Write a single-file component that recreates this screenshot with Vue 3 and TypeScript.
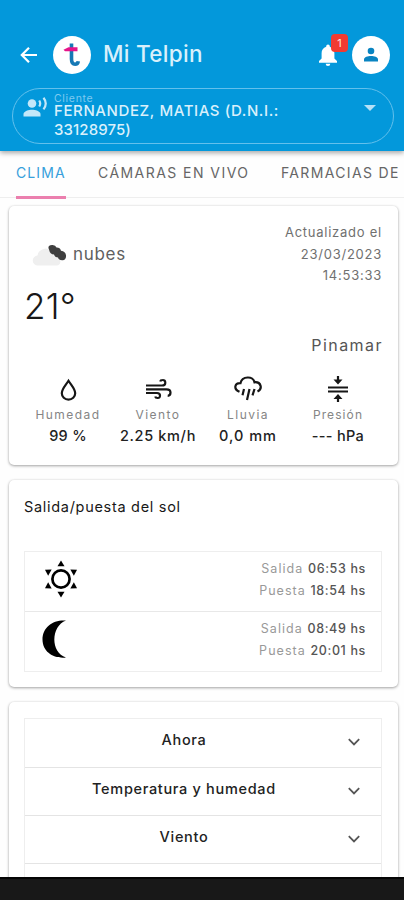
<script setup lang="ts">
interface Metric { icon: 'drop' | 'wind' | 'rain' | 'pressure'; label: string; value: string; cls: string }

const tabs: { label: string; cls: string }[] = [
  { label: 'CLIMA', cls: 'tab-clima' },
  { label: 'CÁMARAS EN VIVO', cls: 'tab-camaras' },
  { label: 'FARMACIAS DE', cls: 'tab-farmacias' },
]

const metrics: Metric[] = [
  { icon: 'drop', label: 'Humedad', value: '99 %', cls: 'm-hum' },
  { icon: 'wind', label: 'Viento', value: '2.25 km/h', cls: 'm-wind' },
  { icon: 'rain', label: 'Lluvia', value: '0,0 mm', cls: 'm-rain' },
  { icon: 'pressure', label: 'Presión', value: '--- hPa', cls: 'm-pres' },
]

const sections: string[] = ['Ahora', 'Temperatura y humedad', 'Viento']
const rays: number[] = [0, 60, 120, 180, 240, 300]
</script>

<template>
  <div class="screen">
    <header class="header">
      <div class="bar">
        <svg class="back" viewBox="0 0 18 18"><path d="M17 9H2M9 1.8 1.8 9 9 16.2" fill="none" stroke="#fff" stroke-width="2.2" /></svg>
        <div class="logo">
          <svg viewBox="0 0 38 38">
            <path d="M18.500 7.500V23q0 5.200 3.600 5.200 2.700 0 3.200-3" fill="none" stroke="#1679b5" stroke-width="3.600" />
            <path d="M10.500 13.800 15.500 11.200H24.500V15.200H12Z" fill="#e5148a" />
          </svg>
        </div>
        <h1 class="title">Mi Telpin</h1>
        <div class="bell">
          <svg viewBox="0 0 18 22"><path d="M9 0.5a1.8 1.8 0 0 1 1.8 1.8v.5c3 .9 4.6 3.4 4.6 6.4v5.3L18 17v1.8H0V17l2.6-2.5V9.2c0-3 1.6-5.500 4.600-6.400v-.5A1.800 1.800 0 0 1 9 .5ZM6.700 19.700h4.600a2.300 2.300 0 0 1-4.600 0Z" fill="#fff" /></svg>
          <span class="badge">1</span>
        </div>
        <div class="avatar">
          <svg viewBox="0 0 14 14"><circle cx="7" cy="3.500" r="3.300" /><path d="M0 14v-2.200C0 9.500 3.800 8.400 7 8.400s7 1.100 7 3.400V14Z" /></svg>
        </div>
      </div>
      <div class="client">
        <svg class="voice" viewBox="0 0 25 20">
          <circle cx="9" cy="6.500" r="4.300" /><path d="M.5 19.500v-2.400c0-3 5.500-4.400 8.500-4.400s8.500 1.400 8.500 4.400v2.400Z" />
          <path d="M16.200 3.500q2 3 0 6M20.500 .8q4.500 5.700 0 11.600" fill="none" stroke="#c3e7f9" stroke-width="2.200" />
        </svg>
        <div class="client-text">
          <span class="client-label">Cliente</span>
          <span class="client-name">FERNANDEZ, MATIAS (D.N.I.:</span>
          <span class="client-id">33128975)</span>
        </div>
        <svg class="caret" viewBox="0 0 12 6"><path d="M0 0h12L6 6Z" /></svg>
      </div>
    </header>

    <nav class="tabs">
      <span v-for="t in tabs" :key="t.label" class="tab" :class="t.cls">{{ t.label }}</span>
    </nav>

    <main class="content">
      <section class="card weather">
        <div class="top">
          <div class="now">
            <div class="sky">
              <svg class="cloud" viewBox="0 0 36 24">
                <path d="M6 23.500a5 5 0 0 1-.5-10q.5-5.500 8-7 5 0 8 7l7 5q0 5-4 5Z" fill="#efefef" />
                <path d="M17 5.500q-2-4 3-4.500 3.500-.3 4.500 2.500 3.500-.2 4.500 3.200 4.500.8 5 4.500.5 4.500-3.500 5-3.800.2-4.500-2.700-3.200-.2-4-3-4 0-5-5Z" fill="#3f3f3f" transform="translate(0 2)" />
              </svg>
              <span class="sky-text">nubes</span>
            </div>
            <div class="temp">21°</div>
          </div>
          <div class="updated"><span class="u1">Actualizado el</span><span class="u2">23/03/2023</span><span class="u3">14:53:33</span></div>
        </div>
        <div class="city">Pinamar</div>
        <div class="metrics">
          <div v-for="m in metrics" :key="m.label" class="metric" :class="m.cls">
            <svg v-if="m.icon === 'drop'" viewBox="0 0 28 28"><path d="M14.500 4.800C12 9 7.800 13 7.800 17.300a6.700 6.300 0 0 0 13.400 0C21.200 13 17 9 14.500 4.800Z" /></svg>
            <svg v-else-if="m.icon === 'wind'" viewBox="0 0 28 28"><path d="M2 9.500H18q3.300 0 3.300-2.800T18.500 4q-2 0-2.300 1.500M2 13.300H22.500q4 0 4 3.300 0 3.200-2.800 3.200M2 17H13q3 0 3 2.600T13.500 22q-2 0-2.300-1.500" /></svg>
            <svg v-else-if="m.icon === 'rain'" viewBox="0 0 28 28"><path d="M5.500 15.800C-1 13 .8 6.800 6.500 7.100 8-.2 19.500-.2 20.500 6.300c6.500-.8 8.500 6.500 3 9.200M10 13l-1.500 6.300M15.500 13l-2.500 11M20.500 13l-2 6.300" /></svg>
            <svg v-else viewBox="0 0 28 28"><path d="M4 11.500h20M4 15.500h20M14 0v4M14 22v4" /><path class="solid" d="M9.500 3.500h9L14 8.500ZM9.500 23h9L14 18Z" /></svg>
            <span class="metric-label">{{ m.label }}</span>
            <span class="metric-value">{{ m.value }}</span>
          </div>
        </div>
      </section>

      <section class="card sun">
        <h2 class="sun-title">Salida/puesta del sol</h2>
        <div class="rows">
          <div class="sun-row">
            <svg viewBox="0 0 40 40">
              <circle cx="20" cy="20" r="8.600" fill="none" stroke="#000" stroke-width="2.700" />
              <path v-for="a in rays" :key="a" d="M20 1.500 23.500 7.200H16.500Z" :transform="`rotate(${a} 20 20)`" />
            </svg>
            <div class="times"><span>Salida <b>06:53 hs</b></span><span>Puesta <b>18:54 hs</b></span></div>
          </div>
          <div class="sun-row">
            <svg class="moon" viewBox="0 0 40 40"><path d="M25 1.500C12 .5 1.500 8 1.500 20.500S13 40 25 38.500C9.500 33.500 9.500 7.500 25 1.500Z" /></svg>
            <div class="times"><span>Salida <b>08:49 hs</b></span><span>Puesta <b>20:01 hs</b></span></div>
          </div>
        </div>
      </section>

      <section class="card details">
        <div class="rows">
          <div v-for="(s, i) in sections" :key="s" class="item" :class="'item-' + i">
            <span>{{ s }}</span>
            <svg viewBox="0 0 12 8"><path d="M.8 1.200 6 6.400 11.200 1.200" /></svg>
          </div>
          <div class="item"></div>
        </div>
      </section>
    </main>
    <footer class="system"></footer>
  </div>
</template>

<style>
body { margin: 0; overflow: hidden; }
</style>

<style scoped>
* { box-sizing: border-box; }
.screen { width: 404px; height: 900px; display: flex; flex-direction: column; overflow: hidden; background: #fefefe; font-family: Inter, "Liberation Sans", sans-serif; color: #222; white-space: nowrap; }
svg { display: block; flex: none; }
.header { height: 151px; flex: none; background: #0398db; padding: 36px 10px 0 12px; box-shadow: 0 2px 5px rgba(0, 0, 0, .35); z-index: 1; }
.bar { height: 38px; display: flex; align-items: center; padding: 0 4px 0 8px; }
.back { width: 18px; height: 18px; }
.logo, .avatar { width: 38px; height: 38px; border-radius: 50%; background: #fff; flex: none; }
.logo { margin-left: 15px; }
.title { margin: -3px 0 0 12px; font-size: 22.500px; line-height: 30px; font-weight: 500; letter-spacing: .3px; color: #d9f0fb; }
.bell { position: relative; margin-left: auto; margin-right: 15px; }
.bell svg { width: 18px; height: 22px; }
.badge { position: absolute; left: 12px; top: -10px; width: 17px; height: 18px; border-radius: 4px; background: #f23a31; color: #ffe4df; font-size: 11px; line-height: 18px; text-align: center; }
.avatar { display: flex; align-items: center; justify-content: center; }
.avatar svg { width: 14px; height: 15px; fill: #0984c1; margin-top: -2px; }
.client { height: 56px; margin-top: 14px; border: 1px solid #63c0ec; border-radius: 28px; display: flex; align-items: flex-start; padding: 4px 17px 0 10px; color: #d9f0fb; }
.voice { width: 25px; height: 20px; margin-top: 4px; fill: #c3e7f9; }
.client-text { display: flex; flex-direction: column; align-items: flex-start; margin-left: 6px; }
.client-label { font-size: 10.500px; line-height: 11px; letter-spacing: .7px; color: #7fcaf0; }
.client-name, .client-id { font-size: 15px; line-height: 16px; font-weight: 500; letter-spacing: .6px; }
.client-name { margin-top: -1px; }
.client-id { letter-spacing: .1px; margin-top: 3px; }
.caret { width: 12px; height: 6px; margin: 12px 0 0 auto; fill: #b5e1f7; }
.tabs { height: 47px; flex: none; display: flex; gap: 32px; padding-left: 16px; border-bottom: 1px solid #eee; }
.tab { line-height: 44px; height: 48px; font-size: 14px; letter-spacing: 1.450px; color: #666; flex: none; }
.tab-clima { width: 50px; color: #37a0dc; border-bottom: 3px solid #eb7fae; letter-spacing: 1.100px; }
.tab-camaras { width: 151px; }
.tab-farmacias { letter-spacing: 1.350px; }
.content { flex: 1; min-height: 0; overflow: hidden; display: flex; flex-direction: column; gap: 15px; padding: 8px 6px 0 9px; }
.card { flex: none; background: #fff; border-radius: 5px; box-shadow: 0 1px 3px rgba(0, 0, 0, .35), 0 0 2px rgba(0, 0, 0, .08); }
.weather { height: 259px; padding: 16px 16px 0 15px; }
.top { display: flex; justify-content: space-between; height: 112px; }
.sky { display: flex; align-items: center; margin: 20px 0 0 8px; height: 24px; }
.cloud { width: 36px; height: 24px; }
.sky-text { margin-left: 5px; font-size: 17px; letter-spacing: .7px; color: #606060; }
.temp { font-size: 35px; line-height: 44px; margin-top: 18px; font-weight: 300; letter-spacing: .2px; color: #181818; }
.updated { display: flex; flex-direction: column; align-items: flex-end; font-size: 13px; line-height: 21.500px; letter-spacing: .75px; color: #707070; }
.city { height: 22px; line-height: 22px; text-align: right; font-size: 16px; letter-spacing: 1.450px; margin-right: -1px; color: #555; }
.metrics { display: grid; grid-template-columns: repeat(4, 1fr); margin: 20px -1px 0 -1px; }
.metric { display: flex; flex-direction: column; align-items: center; }
.metric svg { width: 28px; height: 28px; fill: none; stroke: #161616; stroke-width: 2.200; }
.metric .solid { fill: #161616; stroke: none; }
.metric-label { margin-top: 2px; font-size: 12px; line-height: 18px; letter-spacing: 1.450px; color: #858585; }
.m-pres .metric-label { letter-spacing: 1.100px; }
.metric-value { margin-top: 1px; font-size: 14.500px; line-height: 22px; font-weight: 500; color: #222; letter-spacing: .65px; }
.m-rain .metric-value { letter-spacing: 1px; }
.m-hum .metric-value, .m-pres .metric-value { letter-spacing: .3px; }
.sun { height: 207px; padding: 15px 16px 0 15px; }
.sun-title { margin: 0; font-size: 14.500px; line-height: 23px; font-weight: 400; letter-spacing: .7px; color: #181818; }
.rows { border: 1px solid #eee; }
.sun .rows { margin-top: 33px; }
.sun-row { height: 59px; display: flex; justify-content: space-between; padding: 7px 15px 0 16px; }
.sun-row + .sun-row { height: 60px; border-top: 1px solid #e8e8e8; }
.sun-row svg { width: 40px; height: 40px; }
.times { display: flex; flex-direction: column; align-items: flex-end; font-size: 12.500px; line-height: 21.500px; letter-spacing: 1.050px; color: #999; margin-top: -1px; }
.times b { font-weight: 500; color: #555; letter-spacing: .65px; }
.details { height: 240px; padding: 16px 16px 0 15px; }
.item { height: 48.400px; display: flex; align-items: center; padding: 0 21px 6px 0; font-size: 14.500px; font-weight: 500; letter-spacing: .68px; color: #222; }
.item + .item { border-top: 1px solid #e4e4e4; }
.item:first-child { height: 47.600px; }
.item span { flex: 1; text-align: center; padding-right: 5px; }
.item svg { width: 12px; height: 8px; margin-top: 5px; fill: none; stroke: #555; stroke-width: 1.800; }
.system { height: 23px; flex: none; background: #181818; border-top: 2px solid #050505; }
</style>
